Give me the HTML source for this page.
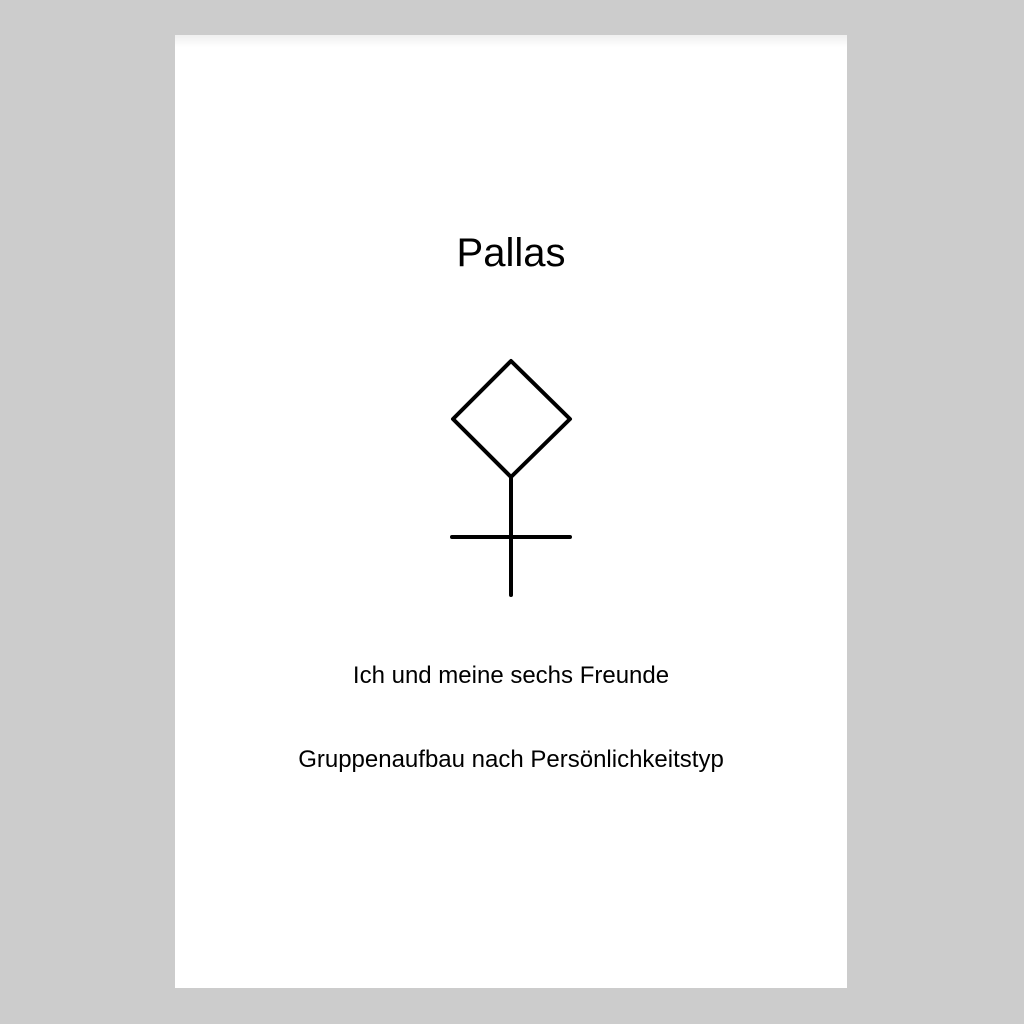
<!DOCTYPE html>
<html><head><style>
html,body{margin:0;padding:0;background:#cccccc;width:1024px;height:1024px;overflow:hidden;font-family:"Liberation Sans",sans-serif;}
.page{position:absolute;left:175px;top:35px;width:672px;height:953px;background:#fff;background-image:linear-gradient(#efefef,#fff 12px,#fff);}
.t{position:absolute;left:0;width:672px;text-align:center;color:#000;white-space:nowrap;}
</style></head><body>
<div class="page">
<div class="t" style="top:195px;font-size:40px;line-height:46px;left:0px;">Pallas</div>
<div class="t" style="top:627px;font-size:24px;line-height:28px;left:0px;">Ich und meine sechs Freunde</div>
<div class="t" style="top:711px;font-size:24px;line-height:28px;left:0px;">Gruppenaufbau nach Persönlichkeitstyp</div>
</div>
<svg width="1024" height="1024" style="position:absolute;left:0;top:0" fill="none" stroke="#000" stroke-width="4" stroke-linecap="round" stroke-linejoin="round">
<path d="M511 361 L570 419 L511 477 L453 419 Z"/>
<path d="M511 477 L511 595 M452 537 L570 537"/>
</svg>
</body></html>
